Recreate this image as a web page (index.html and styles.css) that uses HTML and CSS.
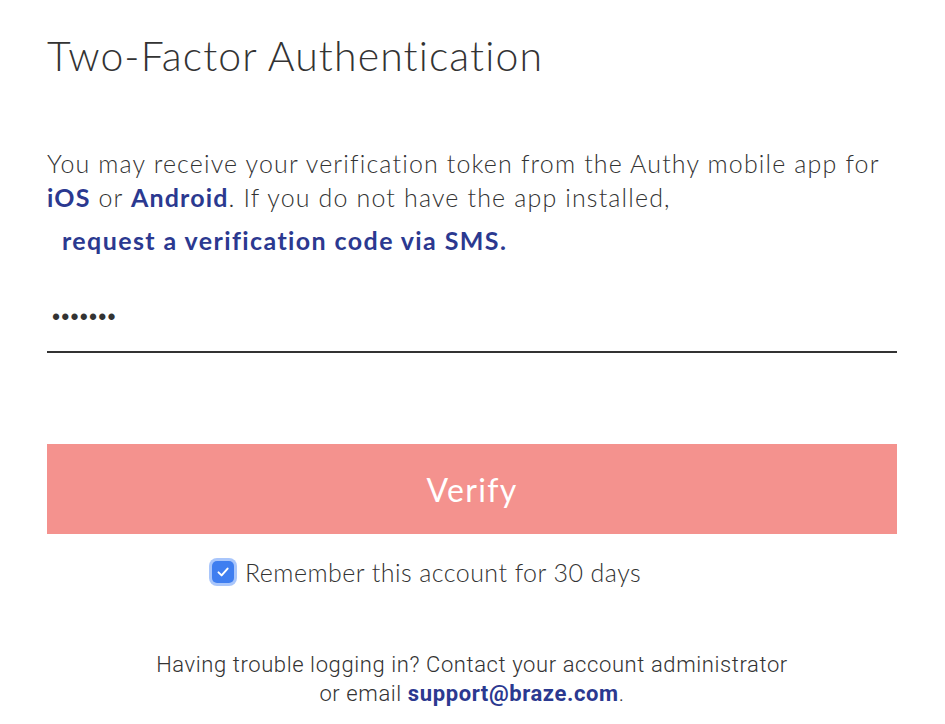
FILE: index.html
```html
<!DOCTYPE html>
<html lang="en">
<head>
<meta charset="utf-8">
<title>Two-Factor Authentication</title>
<link rel="stylesheet" href="styles.css">
</head>
<body>
<main class="auth">
  <h1 class="auth-title">Two-Factor Authentication</h1>
  <p class="auth-intro">You may receive your verification token from the Authy mobile app for <a class="link" href="#">iOS</a> or <a class="link" href="#">Android</a>. If you do not have the app installed,</p>
  <p class="auth-sms"><a class="link" href="#">request a verification code via SMS.</a></p>
  <div class="field">
    <input class="field-input" type="password" value="1234567" aria-label="Verification token">
  </div>
  <button class="verify-btn" type="button">Verify</button>
  <label class="remember">
    <span class="checkbox" aria-hidden="true">
      <svg viewBox="0 0 16 16" width="16" height="16"><path d="M3.5 8.4 L6.6 11.4 L12.6 4.6" fill="none" stroke="#fff" stroke-width="2" stroke-linecap="round" stroke-linejoin="round"/></svg>
    </span>
    <span class="remember-text">Remember this account for 30 days</span>
  </label>
  <p class="help">Having trouble logging in? Contact your account administrator<br>or email <a class="help-link" href="#">support@braze.com</a>.</p>
</main>
</body>
</html>
```
FILE: styles.css
```css
html, body {
  margin: 0;
  padding: 0;
  background: #fff;
}
body {
  font-family: "Lato", "Liberation Sans", sans-serif;
  font-weight: 300;
  color: #333;
}
.auth {
  width: 850px;
  padding: 0 48px 0 47px;
}
.auth-title {
  margin: 32px 0 0;
  font-size: 41px;
  line-height: 48px;
  font-weight: 300;
  letter-spacing: 1.1px;
  color: #333;
}
.auth-intro {
  margin: 66px 0 0;
  font-size: 25px;
  line-height: 34px;
  letter-spacing: 1.15px;
}
.link {
  color: #2b3990;
  font-weight: 700;
  text-decoration: none;
}
.auth-sms {
  margin: 9px 0 0 15px;
  font-size: 25px;
  line-height: 34px;
  letter-spacing: 1.4px;
}
.field {
  height: 96px;
  border-bottom: 2px solid #333;
  display: flex;
  align-items: center;
  box-sizing: border-box;
}
.field-input {
  border: 0;
  outline: none;
  padding: 26px 0 0 5px;
  margin: 0;
  width: 100%;
  font-family: "Liberation Sans", sans-serif;
  font-size: 23px;
  letter-spacing: 1.2px;
  color: #333;
  background: transparent;
}
.verify-btn {
  display: block;
  margin-top: 91px;
  width: 100%;
  height: 90px;
  border: 0;
  background: #f4928e;
  color: #fff;
  font-family: "Lato", "Liberation Sans", sans-serif;
  font-size: 32px;
  font-weight: 400;
  letter-spacing: 1.3px;
  cursor: pointer;
}
.remember {
  display: flex;
  align-items: center;
  gap: 11px;
  margin: 24px 0 0 162px;
  font-size: 25px;
  line-height: 28px;
  letter-spacing: 0.45px;
}
.checkbox {
  width: 22px;
  height: 22px;
  border-radius: 5px;
  background: #3f7ef0;
  box-shadow: 0 0 0 3px #a9c6fb;
  display: flex;
  align-items: center;
  justify-content: center;
  margin-left: 3px;
}
.help {
  margin: 64px 0 0;
  text-align: center;
  font-family: "Roboto", "Liberation Sans", sans-serif;
  font-weight: 300;
  font-size: 22px;
  line-height: 29px;
  letter-spacing: 0.6px;
}
.help-link {
  color: #2b3990;
  font-weight: 700;
  text-decoration: none;
}
```
